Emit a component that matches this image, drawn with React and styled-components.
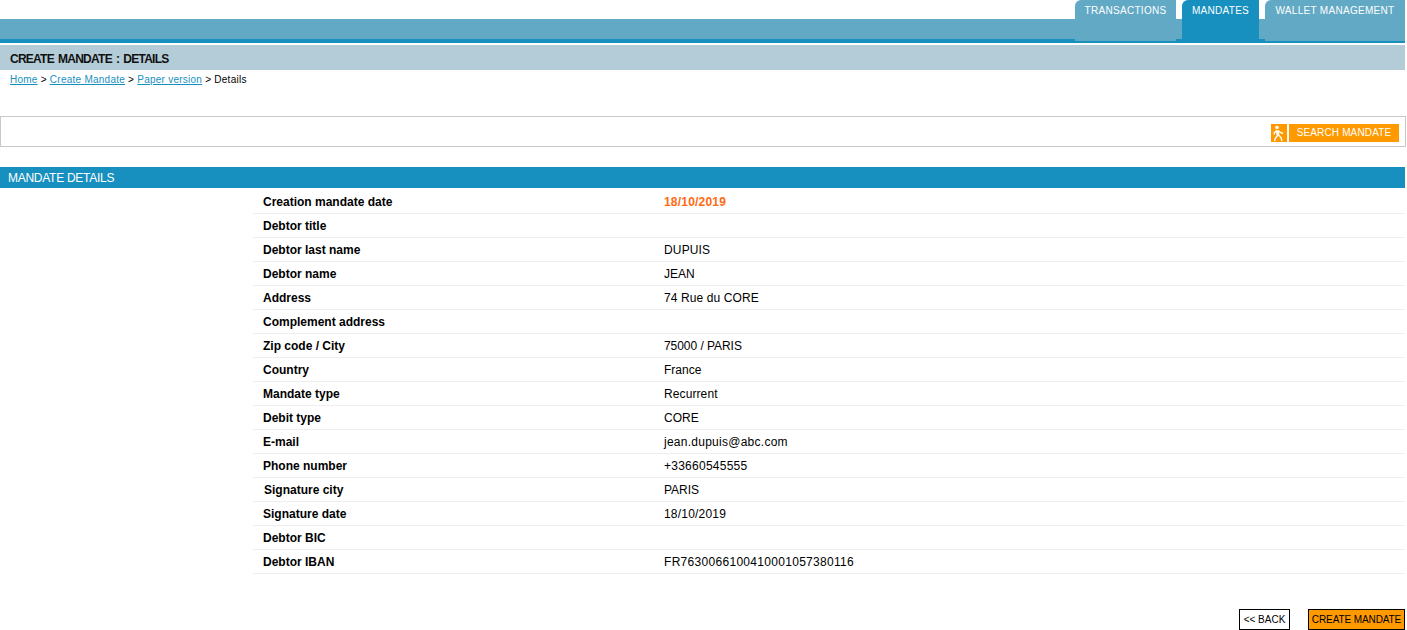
import React from "react";
import styled, { createGlobalStyle } from "styled-components";

const GlobalStyle = createGlobalStyle`
  html, body {
    margin: 0;
    padding: 0;
    background: #fff;
    overflow: hidden;
  }
  body {
    font-family: "Liberation Sans", Arial, sans-serif;
    font-size: 12px;
    color: #000;
  }
`;

const Page = styled.div`
  width: 1405px;
  height: 630px;
  display: flex;
  flex-direction: column;
`;

const Header = styled.header`
  position: relative;
  padding-top: 19px;
  height: 26px;
  flex: none;
`;

const Band = styled.div`
  height: 20px;
  background: #62a9c5;
  border-bottom: 4px solid #1790c0;
`;

const Tabs = styled.nav`
  position: absolute;
  top: 0;
  right: 0;
  display: flex;
  gap: 6px;
`;

const Tab = styled.a`
  display: block;
  box-sizing: border-box;
  width: ${(p) => p.$width}px;
  height: 41px;
  padding-top: 5px;
  text-align: center;
  font-size: 10px;
  letter-spacing: 0.3px;
  line-height: 12px;
  color: #fff;
  background: ${(p) => (p.$active ? "#1790c0" : "#62a9c5")};
  border-radius: 6px 0 0 0;
`;

const TitleBar = styled.h1`
  margin: 0;
  flex: none;
  height: 25px;
  padding-left: 10px;
  background: #b3ccd8;
  font-size: 12px;
  letter-spacing: -0.75px;
  word-spacing: 1.5px;
  line-height: 28px;
  font-weight: bold;
  color: #111;
`;

const Breadcrumb = styled.div`
  flex: none;
  height: 46px;
  padding: 4px 0 0 10px;
  box-sizing: border-box;
  font-size: 10px;
  letter-spacing: 0.25px;
  line-height: 12px;
`;

const Crumb = styled.a`
  color: #1790c0;
  text-decoration: underline;
`;

const SearchBox = styled.div`
  flex: none;
  box-sizing: border-box;
  height: 31px;
  margin-right: -1px;
  border: 1px solid #c8c8c8;
  display: flex;
  justify-content: flex-end;
  align-items: flex-start;
  gap: 2px;
  padding: 7px 6px 0 0;
`;

const WalkerIcon = styled.span`
  width: 16px;
  height: 18px;
  background: #ff9900;
  display: flex;
`;

const SearchButton = styled.button`
  box-sizing: border-box;
  width: 110px;
  height: 18px;
  border: 0;
  padding: 0 0 2px;
  background: #ff9900;
  color: #fff;
  font-family: inherit;
  font-size: 10px;
  letter-spacing: 0.15px;
`;

const SectionTitle = styled.h2`
  flex: none;
  margin: 20px 0 0;
  height: 21px;
  padding-left: 8px;
  background: #1790c0;
  color: #fff;
  font-size: 12px;
  letter-spacing: -0.27px;
  line-height: 23px;
  font-weight: normal;
`;

const Details = styled.dl`
  flex: none;
  margin: 2px 0 0 253px;
`;

const Row = styled.div`
  display: flex;
  height: 24px;
  box-sizing: border-box;
  border-bottom: 1px solid #eeeeee;
  line-height: 25px;
`;

const Label = styled.dt`
  width: 401px;
  padding-left: ${(p) => (p.$shift ? 11 : 10)}px;
  box-sizing: border-box;
  font-weight: bold;
`;

const Value = styled.dd`
  margin: 0;
  color: ${(p) => (p.$accent ? "#ff6a13" : "#000")};
  font-weight: ${(p) => (p.$accent ? "bold" : "normal")};
  letter-spacing: ${(p) => p.$spacing || 0}px;
  padding-left: 10px;
`;

const Actions = styled.div`
  flex: none;
  margin-top: 35px;
  display: flex;
  justify-content: flex-end;
  gap: 18px;
`;

const ActionButton = styled.button`
  box-sizing: border-box;
  width: ${(p) => p.$width}px;
  height: 21px;
  padding: 0;
  border: 1px solid #000;
  background: ${(p) => (p.$primary ? "#ff9900" : "#fff")};
  color: #000;
  font-family: inherit;
  font-size: 10px;
  letter-spacing: ${(p) => (p.$primary ? -0.1 : 0)}px;
`;

const rows = [
  { label: "Creation mandate date", value: "18/10/2019", accent: true, spacing: 0.2 },
  { label: "Debtor title" },
  { label: "Debtor last name", value: "DUPUIS", spacing: 0.15 },
  { label: "Debtor name", value: "JEAN" },
  { label: "Address", value: "74 Rue du CORE", spacing: 0.1 },
  { label: "Complement address" },
  { label: "Zip code / City", value: "75000 / PARIS", spacing: -0.05 },
  { label: "Country", value: "France" },
  { label: "Mandate type", value: "Recurrent", spacing: 0.1 },
  { label: "Debit type", value: "CORE" },
  { label: "E-mail", value: "jean.dupuis@abc.com", spacing: 0.26 },
  { label: "Phone number", value: "+33660545555", spacing: 0.25 },
  { label: "Signature city", value: "PARIS", shift: true },
  { label: "Signature date", value: "18/10/2019", spacing: 0.2 },
  { label: "Debtor BIC" },
  { label: "Debtor IBAN", value: "FR7630066100410001057380116", spacing: 0.3 },
];

function Walker() {
  return (
    <svg width="16" height="18" viewBox="0 0 16 18" fill="none" stroke="#fff">
      <circle cx="6" cy="3.5" r="1.8" fill="#fff" stroke="none" />
      <path d="M6.2 6.5 7 11" strokeWidth="3" />
      <path d="M7 11 4.5 14 3.5 17M7.5 11l2.5 2.5 1 3.5M6 6.5 3.5 8.5 3 10.5M7 6.5 9.5 8.5 12 9.5" strokeWidth="1.4" />
    </svg>
  );
}

export default function App() {
  return (
    <>
      <GlobalStyle />
      <Page>
        <Header>
          <Band />
          <Tabs>
            <Tab $width={101}>TRANSACTIONS</Tab>
            <Tab $width={77} $active>MANDATES</Tab>
            <Tab $width={140}>WALLET MANAGEMENT</Tab>
          </Tabs>
        </Header>
        <TitleBar>CREATE MANDATE : DETAILS</TitleBar>
        <Breadcrumb>
          <Crumb>Home</Crumb> &gt; <Crumb>Create Mandate</Crumb> &gt; <Crumb>Paper version</Crumb> &gt; Details
        </Breadcrumb>
        <SearchBox>
          <WalkerIcon><Walker /></WalkerIcon>
          <SearchButton>SEARCH MANDATE</SearchButton>
        </SearchBox>
        <SectionTitle>MANDATE DETAILS</SectionTitle>
        <Details>
          {rows.map((row) => (
            <Row key={row.label}>
              <Label $shift={row.shift}>{row.label}</Label>
              <Value $accent={row.accent} $spacing={row.spacing}>{row.value}</Value>
            </Row>
          ))}
        </Details>
        <Actions>
          <ActionButton $width={51}>&lt;&lt; BACK</ActionButton>
          <ActionButton $width={97} $primary>CREATE MANDATE</ActionButton>
        </Actions>
      </Page>
    </>
  );
}
